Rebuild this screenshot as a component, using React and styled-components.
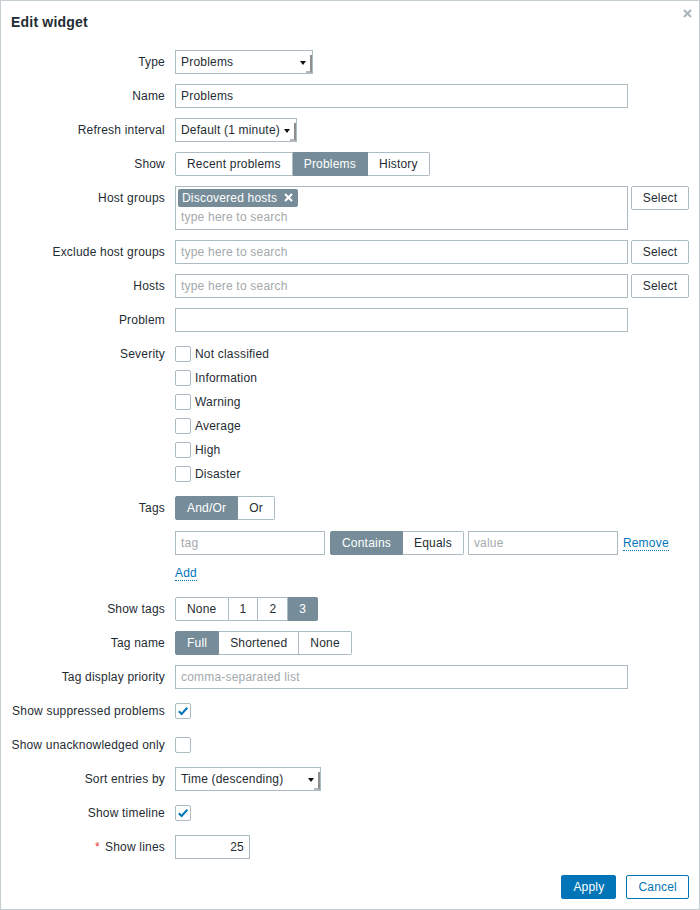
import React from "react";
import styled, { createGlobalStyle, css } from "styled-components";

const GlobalStyle = createGlobalStyle`
  body {
    margin: 0;
    background: #ffffff;
    font-family: "Liberation Sans", Arial, sans-serif;
    font-size: 12px;
    letter-spacing: 0.2px;
    color: #1f2c33;
  }
`;

const Dialog = styled.div`
  position: relative;
  box-sizing: border-box;
  width: 700px;
  height: 910px;
  border: 1px solid #c5ced3;
  background: #fff;
  display: flex;
  flex-direction: column;
`;

const Header = styled.div`
  padding: 13px 10px 0 10px;
  margin-bottom: 20px;
`;

const Title = styled.h4`
  margin: 0;
  font-size: 14px;
  line-height: 16px;
  font-weight: bold;
  color: #1f2c33;
`;

const CloseButton = styled.button`
  position: absolute;
  top: 6px;
  right: 6px;
  width: 12px;
  height: 12px;
  padding: 0;
  border: none;
  background: none;
  display: flex;
  align-items: center;
  justify-content: center;
`;

const Form = styled.div`
  flex: 1;
  display: grid;
  grid-template-columns: 174px 1fr;
  row-gap: 10px;
  align-content: start;
  padding-right: 10px;
`;

const Label = styled.div`
  box-sizing: border-box;
  padding-right: 10px;
  text-align: right;
  line-height: 24px;
  white-space: nowrap;
`;

const Required = styled.span`
  color: #e33734;
  margin-right: 5px;
`;

const Field = styled.div`
  display: flex;
  flex-direction: ${(p) => (p.$column ? "column" : "row")};
  align-items: flex-start;
  gap: ${(p) => p.$gap ?? 0}px;
  min-height: 24px;
`;

const inputBase = css`
  box-sizing: border-box;
  height: 24px;
  border: 1px solid #acbbc2;
  background: #fff;
  padding: 0 5px;
  font-family: inherit;
  font-size: 12px;
  letter-spacing: inherit;
  color: #1f2c33;
  outline: none;
  &::placeholder {
    color: #a4a9ac;
  }
`;

const TextInput = styled.input`
  ${inputBase};
  width: ${(p) => p.$width}px;
  text-align: ${(p) => (p.$right ? "right" : "left")};
`;

const Dropdown = styled.div`
  ${inputBase};
  position: relative;
  width: ${(p) => p.$width}px;
  line-height: 22px;
  &::before {
    content: "";
    position: absolute;
    right: 0;
    bottom: 0;
    width: 6px;
    height: 18px;
    border-right: 2px solid #8e8e8e;
    border-bottom: 2px solid #b8b8b8;
    box-sizing: border-box;
  }
  &::after {
    content: "";
    position: absolute;
    right: 6px;
    top: 10px;
    border-top: 4px solid #111;
    border-left: 3px solid transparent;
    border-right: 3px solid transparent;
  }
`;

const Segmented = styled.div`
  display: inline-flex;
  height: 24px;
`;

const SegButton = styled.div`
  box-sizing: border-box;
  height: 24px;
  line-height: 22px;
  padding: 0 11px;
  border: 1px solid ${(p) => (p.$active ? "#768d99" : "#acbbc2")};
  border-left-width: ${(p) => (p.$first ? 1 : 0)}px;
  background: ${(p) => (p.$active ? "#768d99" : "#fff")};
  color: ${(p) => (p.$active ? "#fff" : "#1f2c33")};
  white-space: nowrap;
  &:first-child {
    border-radius: 2px 0 0 2px;
  }
  &:last-child {
    border-radius: 0 2px 2px 0;
  }
`;

const MultiSelect = styled.div`
  box-sizing: border-box;
  width: 453px;
  height: 44px;
  border: 1px solid #acbbc2;
  padding: 2px;
  display: flex;
  flex-direction: column;
`;

const Chip = styled.span`
  align-self: flex-start;
  display: inline-flex;
  align-items: center;
  gap: 7px;
  height: 18px;
  padding: 0 5px 0 4px;
  border-radius: 2px;
  background: #768d99;
  color: #fff;
  font-size: 12px;
`;

const SearchInput = styled.input`
  ${inputBase};
  border: none;
  height: 21px;
  padding: 1px 3px 0;
  width: 100%;
`;

const Button = styled.button`
  box-sizing: border-box;
  height: 24px;
  padding: 0 11px;
  border: 1px solid ${(p) => (p.$primary ? "#0275b8" : p.$outline ? "#0275b8" : "#acbbc2")};
  border-radius: 2px;
  background: ${(p) => (p.$primary ? "#0275b8" : "#fff")};
  color: ${(p) => (p.$primary ? "#fff" : p.$outline ? "#0275b8" : "#1f2c33")};
  font-family: inherit;
  font-size: 12px;
  letter-spacing: inherit;
  line-height: 22px;
  cursor: pointer;
`;

const SelectButton = styled(Button)`
  width: 58px;
  padding: 0;
`;

const CheckList = styled.div`
  display: flex;
  flex-direction: column;
`;

const CheckRow = styled.label`
  display: flex;
  align-items: center;
  gap: 4px;
  height: 24px;
`;

const Box = styled.span`
  box-sizing: border-box;
  width: 16px;
  height: 16px;
  border: 1px solid #acbbc2;
  border-radius: 2px;
  background: #fff;
  display: inline-flex;
  align-items: center;
  justify-content: center;
`;

const TagRow = styled.div`
  display: flex;
  align-items: center;
  margin-top: 11px;
`;

const Spacer = styled.div`
  width: ${(p) => p.$w}px;
  flex: none;
`;

const Link = styled.a`
  color: #0275b8;
  text-decoration: none;
  border-bottom: 1px dotted #0275b8;
  line-height: 14px;
  cursor: pointer;
`;

const AddLine = styled.div`
  height: 24px;
  margin-top: 8px;
  display: flex;
  align-items: flex-start;
  padding-top: 3px;
  box-sizing: border-box;
`;

const Footer = styled.div`
  display: flex;
  justify-content: flex-end;
  gap: 10px;
  padding: 0 10px 10px 0;
`;

function Checkbox({ checked }) {
  return (
    <Box>
      {checked && (
        <svg width="12" height="12" viewBox="0 0 12 12">
          <path d="M1.8 6.2 L4.6 9 L10.3 2.8" fill="none" stroke="#0275b8" strokeWidth="2" />
        </svg>
      )}
    </Box>
  );
}

function Check({ label, checked }) {
  return (
    <CheckRow>
      <Checkbox checked={checked} />
      {label}
    </CheckRow>
  );
}

function SegGroup({ items, active }) {
  return (
    <Segmented>
      {items.map((it, i) => (
        <SegButton key={it} $first={i === 0} $active={it === active}>
          {it}
        </SegButton>
      ))}
    </Segmented>
  );
}

const severities = ["Not classified", "Information", "Warning", "Average", "High", "Disaster"];

export default function App() {
  return (
    <Dialog>
      <GlobalStyle />
      <Header>
        <Title>Edit widget</Title>
      </Header>
      <CloseButton aria-label="Close">
        <svg width="9" height="9" viewBox="0 0 9 9">
          <path d="M1 1 L8 8 M8 1 L1 8" stroke="#a7b4bb" strokeWidth="2" />
        </svg>
      </CloseButton>

      <Form>
        <Label>Type</Label>
        <Field>
          <Dropdown $width={138}>Problems</Dropdown>
        </Field>

        <Label>Name</Label>
        <Field>
          <TextInput $width={453} value="Problems" readOnly />
        </Field>

        <Label>Refresh interval</Label>
        <Field>
          <Dropdown $width={122}>Default (1 minute)</Dropdown>
        </Field>

        <Label>Show</Label>
        <Field>
          <SegGroup items={["Recent problems", "Problems", "History"]} active="Problems" />
        </Field>

        <Label>Host groups</Label>
        <Field $gap={3}>
          <MultiSelect>
            <Chip>
              Discovered hosts
              <svg width="9" height="9" viewBox="0 0 9 9">
                <path d="M1 1 L8 8 M8 1 L1 8" stroke="#fff" strokeWidth="2.2" />
              </svg>
            </Chip>
            <SearchInput placeholder="type here to search" readOnly />
          </MultiSelect>
          <SelectButton>Select</SelectButton>
        </Field>

        <Label>Exclude host groups</Label>
        <Field $gap={3}>
          <TextInput $width={453} placeholder="type here to search" readOnly />
          <SelectButton>Select</SelectButton>
        </Field>

        <Label>Hosts</Label>
        <Field $gap={3}>
          <TextInput $width={453} placeholder="type here to search" readOnly />
          <SelectButton>Select</SelectButton>
        </Field>

        <Label>Problem</Label>
        <Field>
          <TextInput $width={453} readOnly />
        </Field>

        <Label>Severity</Label>
        <CheckList>
          {severities.map((s) => (
            <Check key={s} label={s} />
          ))}
        </CheckList>

        <Label>Tags</Label>
        <Field $column>
          <SegGroup items={["And/Or", "Or"]} active="And/Or" />
          <TagRow>
            <TextInput $width={150} placeholder="tag" readOnly />
            <Spacer $w={5} />
            <SegGroup items={["Contains", "Equals"]} active="Contains" />
            <Spacer $w={4} />
            <TextInput $width={150} placeholder="value" readOnly />
            <Spacer $w={5} />
            <Link>Remove</Link>
          </TagRow>
          <AddLine>
            <Link>Add</Link>
          </AddLine>
        </Field>

        <Label>Show tags</Label>
        <Field>
          <SegGroup items={["None", "1", "2", "3"]} active="3" />
        </Field>

        <Label>Tag name</Label>
        <Field>
          <SegGroup items={["Full", "Shortened", "None"]} active="Full" />
        </Field>

        <Label>Tag display priority</Label>
        <Field>
          <TextInput $width={453} placeholder="comma-separated list" readOnly />
        </Field>

        <Label>Show suppressed problems</Label>
        <CheckRow>
          <Checkbox checked />
        </CheckRow>

        <Label>Show unacknowledged only</Label>
        <CheckRow>
          <Checkbox />
        </CheckRow>

        <Label>Sort entries by</Label>
        <Field>
          <Dropdown $width={146}>Time (descending)</Dropdown>
        </Field>

        <Label>Show timeline</Label>
        <CheckRow>
          <Checkbox checked />
        </CheckRow>

        <Label>
          <Required>*</Required>Show lines
        </Label>
        <Field>
          <TextInput $width={75} $right value="25" readOnly />
        </Field>
      </Form>

      <Footer>
        <Button $primary>Apply</Button>
        <Button $outline>Cancel</Button>
      </Footer>
    </Dialog>
  );
}
